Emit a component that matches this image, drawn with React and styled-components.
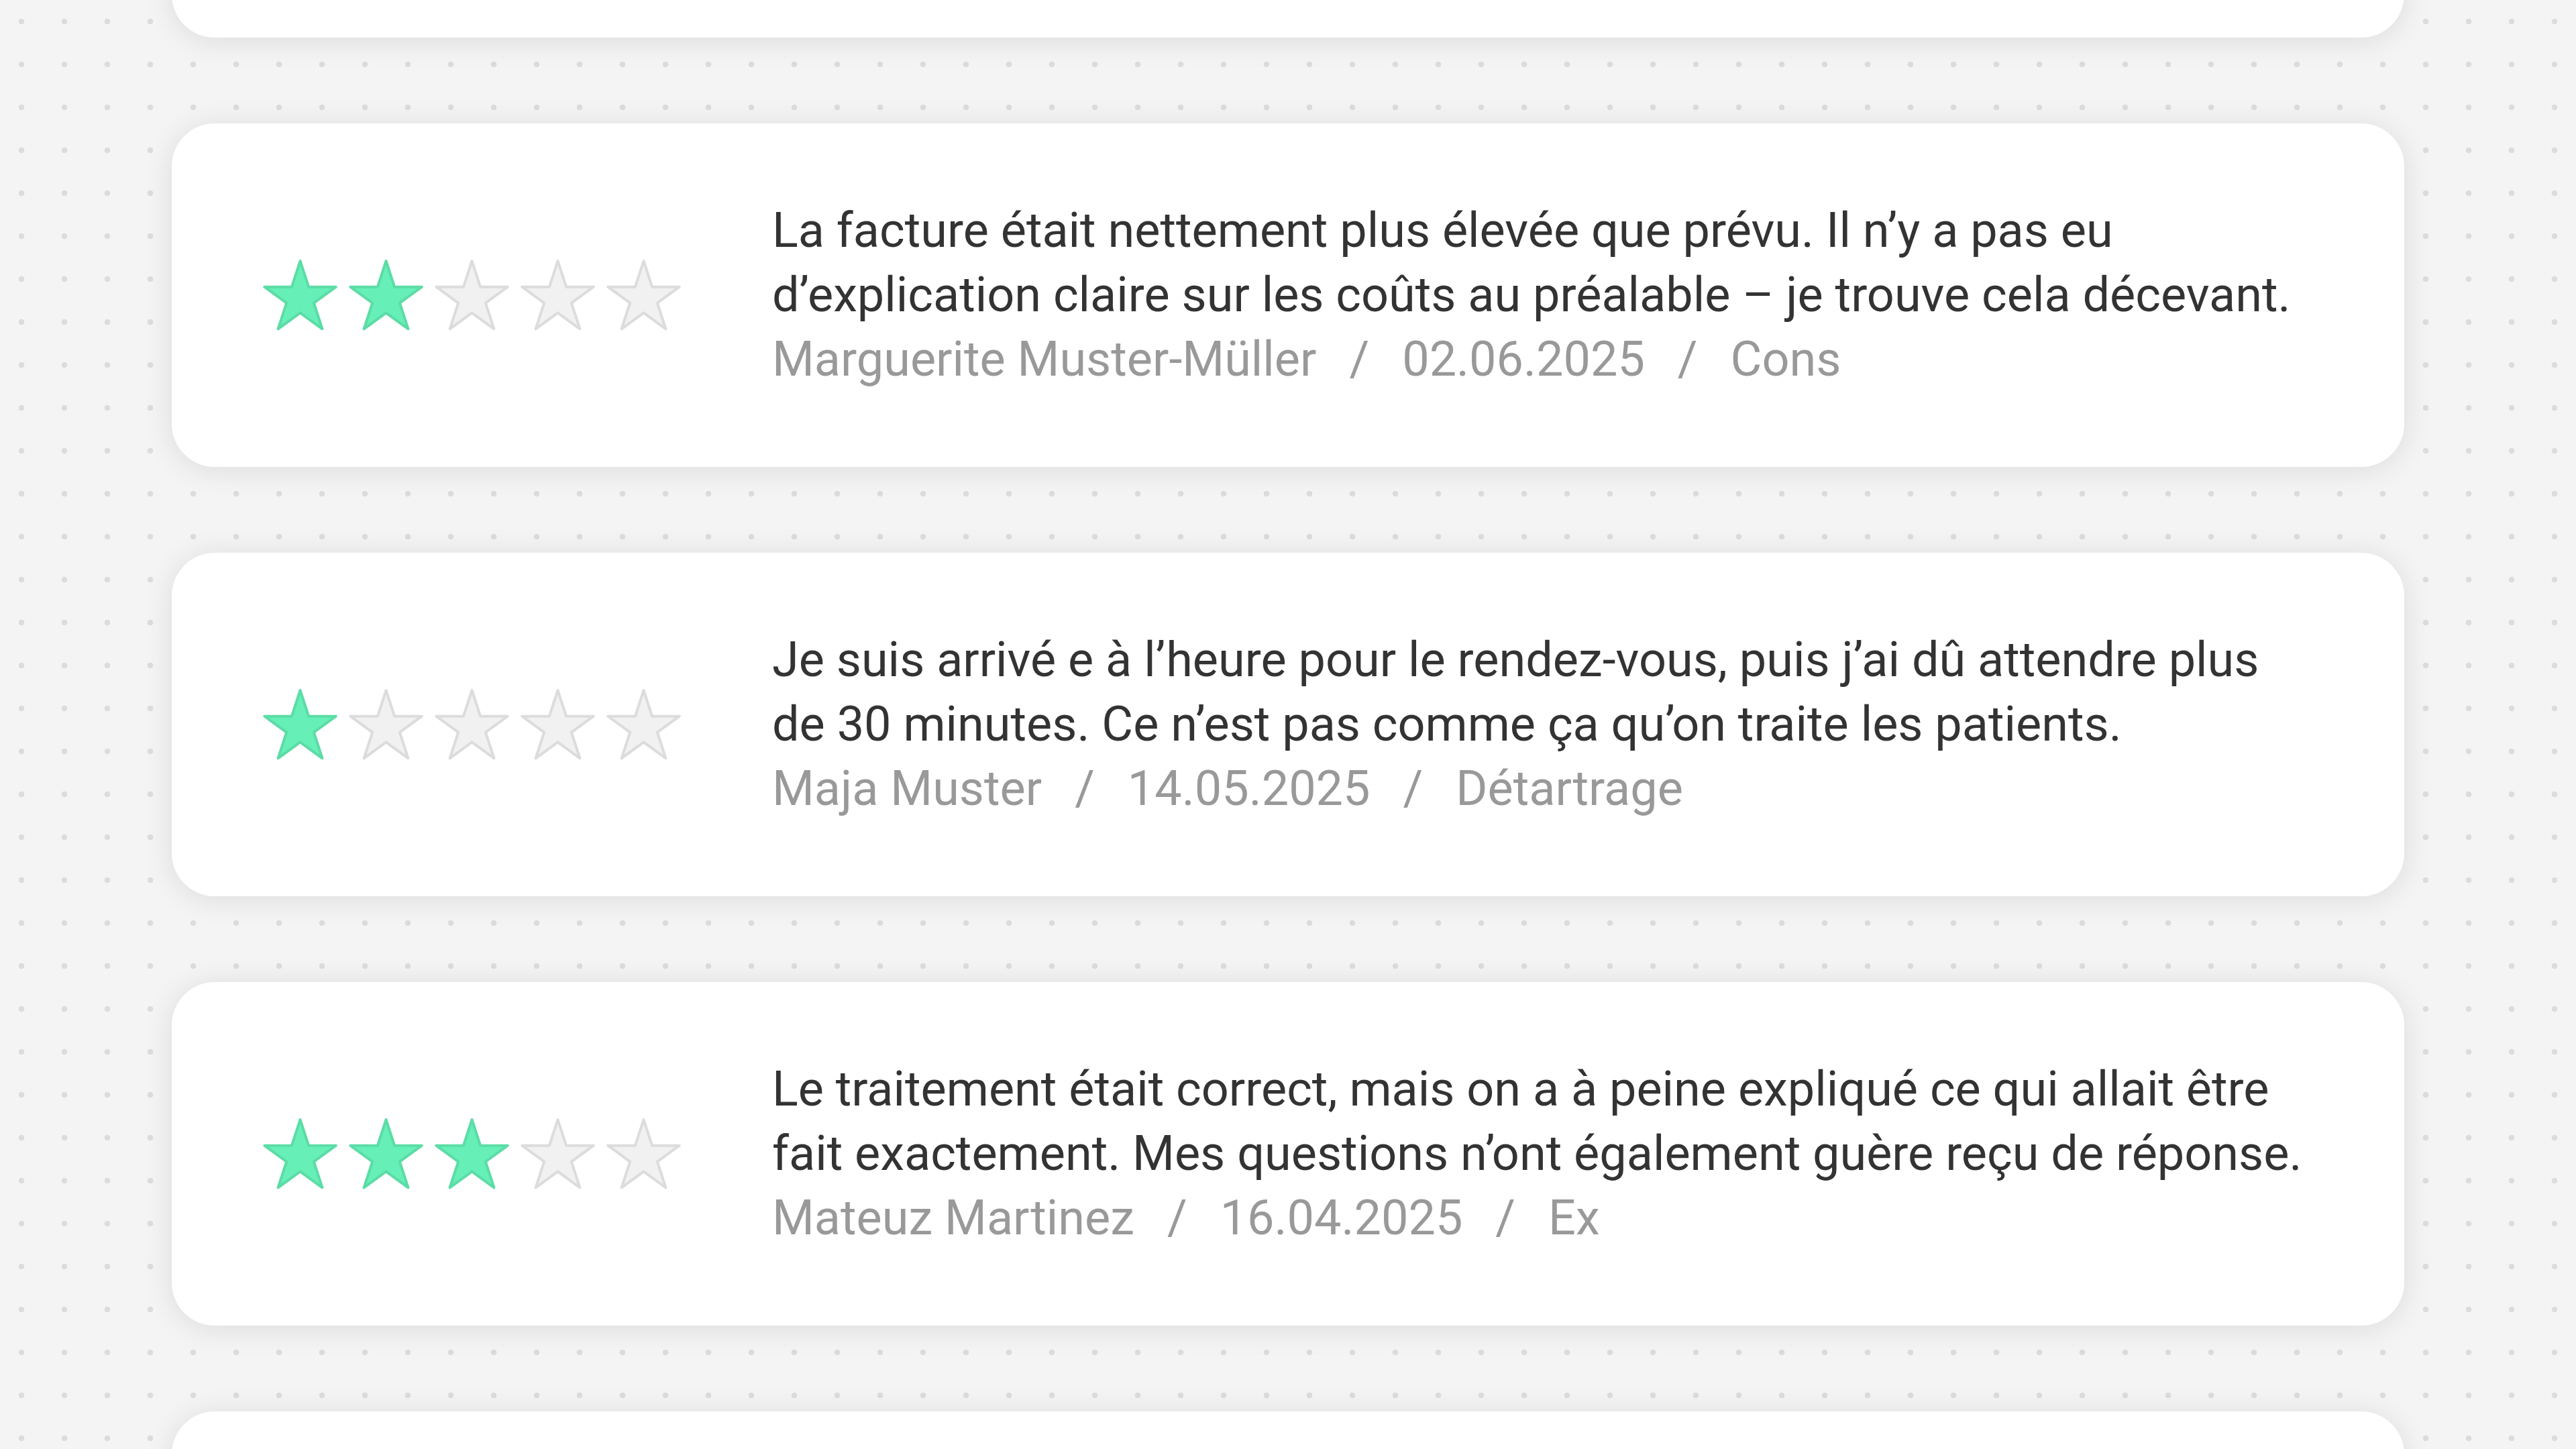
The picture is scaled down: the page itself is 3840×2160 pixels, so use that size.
import React from "react";
import styled, { createGlobalStyle } from "styled-components";

const Global = createGlobalStyle`
  html, body {
    margin: 0;
    padding: 0;
  }
  body {
    background-color: #f4f4f4;
    background-image: radial-gradient(circle at center, #dcdcdc 0, #dcdcdc 4px, transparent 4.6px);
    background-size: 64px 64px;
    background-position: 0 0;
    font-family: Roboto, "Noto Sans", Arial, sans-serif;
  }
`;

const Viewport = styled.main`
  height: 100vh;
  overflow: hidden;
  padding: 0 256px;
  box-sizing: border-box;
`;

const ReviewList = styled.ul`
  list-style: none;
  margin: -456px 0 0;
  padding: 0;
  display: flex;
  flex-direction: column;
  gap: 128px;
`;

const Card = styled.li`
  display: flex;
  align-items: center;
  gap: 136px;
  height: 512px;
  box-sizing: border-box;
  padding: 0 136px;
  background: #ffffff;
  border-radius: 64px;
  box-shadow: 0 4px 44px rgba(0, 0, 0, 0.1);
`;

const Stars = styled.div`
  display: flex;
  align-items: center;
  gap: 17px;
  flex-shrink: 0;
`;

const StarSvg = styled.svg`
  display: block;
  width: 111px;
  height: 106px;
  overflow: visible;
`;

const StarShape = styled.polygon`
  fill: ${(p) => (p.$filled ? "#66f0b8" : "#f1f1f1")};
  stroke: ${(p) => (p.$filled ? "#5cdca6" : "#dcdcdc")};
  stroke-width: 4px;
  stroke-linejoin: round;
`;

const Body = styled.div`
  display: flex;
  flex-direction: column;
  min-width: 0;
  font-family: Roboto, "Noto Sans", Arial, sans-serif;
  font-size: 72px;
  line-height: 96px;
`;

const Quote = styled.p`
  margin: 0;
  color: #333333;
`;

const Meta = styled.div`
  display: flex;
  align-items: baseline;
  gap: 49px;
  color: #999999;
  white-space: nowrap;
`;

const Sep = styled.span`
  color: #999999;
`;

const R = 56;
const r = R * 0.381966;
const CX = 55.5;
const CY = 58;
const starPoints = Array.from({ length: 10 }, (_, i) => {
  const rad = i % 2 === 0 ? R : r;
  const a = (-90 + i * 36) * (Math.PI / 180);
  return `${(CX + rad * Math.cos(a)).toFixed(2)},${(CY + rad * Math.sin(a)).toFixed(2)}`;
}).join(" ");

function Star({ filled }) {
  return (
    <StarSvg viewBox="0 0 111 106" aria-hidden="true">
      <StarShape $filled={filled} points={starPoints} />
    </StarSvg>
  );
}

function Rating({ value }) {
  return (
    <Stars aria-label={`${value} sur 5`}>
      {[1, 2, 3, 4, 5].map((n) => (
        <Star key={n} filled={n <= value} />
      ))}
    </Stars>
  );
}

const reviews = [
  { rating: 4, edge: true },
  {
    rating: 2,
    text: "La facture était nettement plus élevée que prévu. Il n’y a pas eu d’explication claire sur les coûts au préalable – je trouve cela décevant.",
    author: "Marguerite Muster-Müller",
    date: "02.06.2025",
    tag: "Cons",
  },
  {
    rating: 1,
    text: "Je suis arrivé e à l’heure pour le rendez-vous, puis j’ai dû attendre plus de 30 minutes. Ce n’est pas comme ça qu’on traite les patients.",
    author: "Maja Muster",
    date: "14.05.2025",
    tag: "Détartrage",
  },
  {
    rating: 3,
    text: "Le traitement était correct, mais on a à peine expliqué ce qui allait être fait exactement. Mes questions n’ont également guère reçu de réponse.",
    author: "Mateuz Martinez",
    date: "16.04.2025",
    tag: "Ex",
  },
  { rating: 5, edge: true },
];

export default function App() {
  return (
    <>
      <Global />
      <Viewport>
        <ReviewList>
          {reviews.map((rv, i) => (
            <Card key={i}>
              <Rating value={rv.rating} />
              {!rv.edge && (
                <Body>
                  <Quote>{rv.text}</Quote>
                  <Meta>
                    <span>{rv.author}</span>
                    <Sep>/</Sep>
                    <span>{rv.date}</span>
                    <Sep>/</Sep>
                    <span>{rv.tag}</span>
                  </Meta>
                </Body>
              )}
            </Card>
          ))}
        </ReviewList>
      </Viewport>
    </>
  );
}
